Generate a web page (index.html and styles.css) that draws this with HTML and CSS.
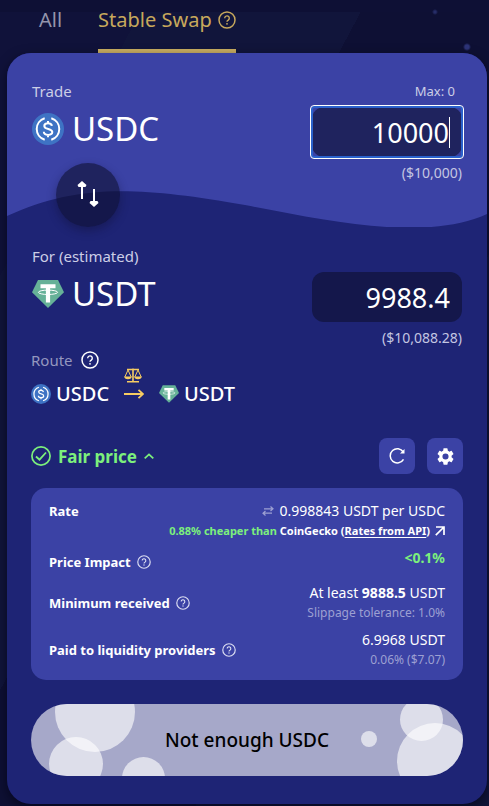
FILE: index.html
```html
<!DOCTYPE html>
<html lang="en">
<head>
<meta charset="utf-8">
<meta name="viewport" content="width=device-width, initial-scale=1">
<title>Stable Swap</title>
<link rel="stylesheet" href="styles.css">
</head>
<body>
<svg class="defs" aria-hidden="true">
  <symbol id="help" viewBox="0 0 18 18">
    <circle cx="9" cy="9" r="8" fill="none" stroke="currentColor" stroke-width="1.5"/>
    <path d="M6.700 7.200a2.300 2.300 0 1 1 3.600 1.900c-.9.6-1.300 1-1.300 1.700" fill="none" stroke="currentColor" stroke-width="1.4"/>
    <circle cx="9" cy="12.800" r=".9" fill="currentColor"/>
  </symbol>
  <symbol id="usdc" viewBox="0 0 32 32">
    <circle cx="16" cy="16" r="16" fill="#3e73c4"/>
    <path d="M12.700 5.200a11.300 11.300 0 0 0 0 21.600M19.300 5.200a11.300 11.300 0 0 1 0 21.600" fill="none" stroke="#fff" stroke-width="2"/>
    <path d="M19.900 12.900c-.2-1.800-1.600-2.700-3.900-2.700s-3.700 1-3.700 2.700c0 4.100 8 2 8 6.200 0 1.800-1.700 2.800-4.200 2.800s-4.200-1-4.300-3.100M16 7.900v2.600M16 21.700v2.600" fill="none" stroke="#fff" stroke-width="2"/>
  </symbol>
  <symbol id="usdt" viewBox="0 0 32 28">
    <path d="M6 0h20l6 12.200L16 28 0 12.200z" fill="#66b198"/>
    <path d="M8.500 4.200h15v4h-5.400v14.400h-4.200V8.200H8.500z" fill="#fff"/>
    <ellipse cx="16" cy="12.300" rx="9.600" ry="2.200" fill="none" stroke="#fff" stroke-width="1"/>
  </symbol>
</svg>

<nav class="tabs">
  <a class="tab" href="#all">All</a>
  <a class="tab tab-active" href="#stable" aria-current="page">Stable Swap <svg class="help-md"><use href="#help"/></svg></a>
</nav>

<main class="card">
  <svg class="wave" viewBox="0 0 480 174" preserveAspectRatio="none" aria-hidden="true">
    <path d="M0 0H480V161C420 188 330 170 238 152C130 133 70 131 0 163Z" fill="#3b42a5"/>
  </svg>

  <section class="side">
    <div class="side-token">
      <label class="label" for="pay">Trade</label>
      <div class="token"><svg class="coin"><use href="#usdc"/></svg>USDC</div>
      <button class="swap" type="button" aria-label="Switch tokens">
        <svg viewBox="0 0 24 28"><path d="M6 18V4M18 8v14" fill="none" stroke="#fff" stroke-width="2"/><path d="M6 0l4.500 4-1 2h-7l-1-2zM18 26l4.500-4-1-2h-7l-1 2z" fill="#fff"/></svg>
      </button>
    </div>
    <div class="side-amount">
      <span class="max">Max: 0</span>
      <div class="field field-focus">
        <input id="pay" class="amount" type="text" inputmode="decimal" value="10000"><span class="caret"></span>
      </div>
      <span class="usd">($10,000)</span>
    </div>
  </section>

  <section class="side">
    <div class="side-token">
      <label class="label" for="receive">For (estimated)</label>
      <div class="token"><svg class="coin"><use href="#usdt"/></svg>USDT</div>
    </div>
    <div class="side-amount">
      <span class="max"></span>
      <div class="field"><input id="receive" class="amount" type="text" value="9988.4" readonly></div>
      <span class="usd">($10,088.28)</span>
    </div>
  </section>

  <section class="route">
    <div class="route-title">Route <svg class="help-md"><use href="#help"/></svg></div>
    <div class="route-path">
      <span class="hop"><svg class="coin-sm"><use href="#usdc"/></svg>USDC</span>
      <span class="via">
        <svg class="scales" viewBox="0 0 18 15"><path d="M3 1.500h12M9 .5v13M3 13.800h12" fill="none" stroke="#f7cc62" stroke-width="1.600"/><path d="M4 2 .8 9M4 2l3.200 7M14 2l-3.200 7M14 2l3.200 7" fill="none" stroke="#f7cc62"/><path d="M.3 8.500h7.400a3.700 2.800 0 0 1-7.400 0zM10.300 8.500h7.400a3.700 2.800 0 0 1-7.400 0z" fill="#f7cc62"/></svg>
        <svg class="arrow" viewBox="0 0 20 10"><path d="M0 5h19M14.500.8 19 5l-4.500 4.200" fill="none" stroke="#f7cc62" stroke-width="1.800"/></svg>
      </span>
      <span class="hop"><svg class="coin-sm"><use href="#usdt"/></svg>USDT</span>
    </div>
  </section>

  <div class="status">
    <button class="fair" type="button" aria-expanded="true">
      <svg class="check" viewBox="0 0 20 20"><circle cx="10" cy="10" r="9.100" fill="none" stroke="currentColor" stroke-width="1.700"/><path d="m5 10.500 3.500 3.200L15 6.500" fill="none" stroke="currentColor" stroke-width="1.800"/></svg>
      Fair price
      <svg class="chevron" viewBox="0 0 10 6"><path d="m.7 5.300 4.300-4 4.300 4" fill="none" stroke="currentColor" stroke-width="1.700"/></svg>
    </button>
    <button class="tool" type="button" aria-label="Refresh">
      <svg viewBox="0 0 18 18"><path d="M15.300 5A7.100 7.100 0 1 0 15.500 12.300" fill="none" stroke="#fff" stroke-width="1.500"/><path d="M16.500 2v4.500H12z" fill="#fff"/></svg>
    </button>
    <button class="tool" type="button" aria-label="Settings">
      <svg class="gear" viewBox="2 2 20 20"><path fill="#fff" d="M19.140 12.940c.04-.3.060-.61.060-.94 0-.32-.02-.64-.07-.94l2.030-1.580a.49.49 0 0 0 .12-.61l-1.920-3.320a.488.488 0 0 0-.59-.22l-2.390.96c-.5-.38-1.030-.7-1.620-.94l-.36-2.540a.484.484 0 0 0-.48-.41h-3.840c-.24 0-.43.17-.47.41l-.36 2.540c-.59.24-1.130.57-1.620.94l-2.390-.96c-.22-.08-.47 0-.59.22L2.740 8.870c-.12.21-.08.47.12.61l2.030 1.580c-.05.3-.09.63-.09.94s.02.64.07.94l-2.030 1.580a.49.49 0 0 0-.12.61l1.920 3.320c.12.22.37.29.59.22l2.390-.96c.5.38 1.030.7 1.620.94l.36 2.540c.05.24.24.41.48.41h3.840c.24 0 .44-.17.47-.41l.36-2.540c.59-.24 1.130-.56 1.620-.94l2.390.96c.22.080.47 0 .59-.22l1.920-3.320c.12-.22.070-.47-.12-.61l-2.010-1.580zM12 15.600a3.600 3.600 0 1 1 0-7.200 3.600 3.600 0 0 1 0 7.200z"/></svg>
    </button>
  </div>

  <dl class="details">
    <div class="row row-top">
      <dt>Rate</dt>
      <dd>
        <div class="value"><svg class="flip" viewBox="0 0 12 10"><path d="M2 2.800h9M8.500.5 11 2.800 8.500 5M10 7.200H1M3.500 5 1 7.200l2.500 2.300" fill="none" stroke="currentColor" stroke-width="1.200"/></svg>0.998843 USDT per USDC</div>
        <div class="compare"><span><span class="good">0.88% cheaper than</span> CoinGecko (<a href="#rates">Rates from API</a>)</span><svg class="out" viewBox="0 0 10 10"><path d="M1 1h8v8M9 1 .8 9.200" fill="none" stroke="currentColor" stroke-width="1.700"/></svg></div>
      </dd>
    </div>
    <div class="row row-impact">
      <dt>Price Impact <svg class="help-sm"><use href="#help"/></svg></dt>
      <dd><div class="value good">&lt;0.1%</div></dd>
    </div>
    <div class="row">
      <dt>Minimum received <svg class="help-sm"><use href="#help"/></svg></dt>
      <dd><div class="value"><span>At least <b>9888.5</b> USDT</span></div><div class="note">Slippage tolerance: 1.0%</div></dd>
    </div>
    <div class="row">
      <dt>Paid to liquidity providers <svg class="help-sm"><use href="#help"/></svg></dt>
      <dd><div class="value">6.9968 USDT</div><div class="note">0.06% ($7.07)</div></dd>
    </div>
  </dl>

  <button class="submit" type="button">
    <span class="bubble b1"></span><span class="bubble b2"></span><span class="bubble b3"></span>
    <span class="bubble b4"></span><span class="bubble b5"></span><span class="bubble b6"></span>
    <span class="submit-text">Not enough USDC</span>
  </button>
</main>
</body>
</html>
```
FILE: styles.css
```css
* { box-sizing: border-box; }

body {
  margin: 0;
  padding: 0 2px 2px 7px;
  color: #fff;
  font-family: "Noto Sans", "Open Sans", sans-serif;
  background:
    radial-gradient(circle at 435px 12px, #262d68 1px, transparent 3px),
    radial-gradient(circle at 467px 47px, #2d3478 2px, transparent 4px),
    linear-gradient(#0e1035 12px, transparent 12px),
    linear-gradient(118deg, #10123a 16%, #11153b 16% 40%, #0e1034 40% 68%, #101539 68%);
}

button, input { font: inherit; color: inherit; border: 0; padding: 0; margin: 0; }
button { cursor: pointer; }
svg { display: block; flex: none; }
.defs { position: absolute; width: 0; height: 0; }

.help-md { width: 18px; height: 18px; }
.help-sm { width: 14px; height: 14px; color: #dcdef2; }

.tabs { display: flex; gap: 36px; padding-left: 32px; }
.tab {
  display: flex;
  align-items: center;
  gap: 6px;
  height: 53px;
  padding-bottom: 9px;
  border-bottom: 4px solid transparent;
  font-size: 20px;
  line-height: 40px;
  color: #9495ac;
  text-decoration: none;
}
.tab-active { color: #c7a85c; border-color: #ccb062; }

.card {
  position: relative;
  padding: 26px 24px 28px;
  border-radius: 24px;
  background: #1e2475;
  box-shadow: 0 4px 12px rgba(0, 0, 16, .6);
  overflow: hidden;
}
.wave { position: absolute; inset: 0 0 auto; width: 100%; height: 174px; }

.side { position: relative; display: flex; justify-content: space-between; padding: 0 1px; }
.side + .side { margin-top: 17px; }
.side-token { display: flex; flex-direction: column; }
.label { font-size: 15px; line-height: 24px; color: #cccee6; }
.token {
  display: flex;
  align-items: center;
  gap: 8px;
  height: 52px;
  font-size: 33px;
  font-weight: 400;
  line-height: 52px;
}
.coin { width: 32px; height: 32px; }
.swap {
  display: grid;
  place-items: center;
  width: 64px;
  height: 64px;
  margin: 8px 0 0 24px;
  border-radius: 50%;
  background: rgba(14, 15, 47, .6);
  box-shadow: 0 4px 10px rgba(14, 15, 47, .4);
}
.swap svg { width: 24px; height: 28px; }

.side-amount { display: flex; flex-direction: column; align-items: flex-end; }
.max { height: 24px; padding-right: 7px; font-size: 13px; line-height: 24px; color: #cccee6; }
.field {
  position: relative;
  display: flex;
  align-items: center;
  width: 150px;
  height: 50px;
  margin: 4px 0;
  padding: 0 12px;
  border-radius: 12px;
  background: rgba(14, 15, 47, .6);
}
.field-focus::before {
  content: "";
  position: absolute;
  inset: -2px;
  border: 1px solid #fff;
  border-radius: 4px;
  box-shadow: inset 0 0 0 2px #2b62cc;
}
.amount {
  flex: 1;
  min-width: 0;
  height: 50px;
  background: none;
  outline: 0;
  font-size: 27px;
  text-align: right;
}
.caret { width: 1px; height: 31px; background: #fff; }
.usd { font-size: 14px; line-height: 24px; color: #c4c6e2; }

.route { position: relative; }
.route-title { display: flex; align-items: center; gap: 8px; font-size: 15px; line-height: 20px; color: #9497bf; }
.route-title svg { color: #fff; }
.route-path { display: flex; align-items: center; gap: 15px; margin-top: 12px; font-size: 20px; line-height: 24px; font-weight: 500; }
.hop { display: flex; align-items: center; gap: 5px; }
.coin-sm { width: 20px; height: 20px; }
.via { position: relative; }
.scales { position: absolute; left: 0; bottom: 16px; width: 18px; height: 15px; }
.arrow { width: 20px; height: 10px; }

.status { display: flex; align-items: center; gap: 12px; margin-top: 32px; }
.fair {
  display: flex;
  align-items: center;
  gap: 7px;
  margin-right: auto;
  background: none;
  color: #7cf07c;
  font-size: 17px;
  font-weight: 700;
}
.check { width: 20px; height: 20px; }
.chevron { width: 10px; height: 6px; }
.tool { display: grid; place-items: center; width: 36px; height: 36px; border-radius: 8px; background: #3b42a5; }
.tool svg { width: 18px; height: 18px; }
.tool .gear { width: 17px; height: 17px; }

.details {
  display: grid;
  gap: 7px;
  margin: 14px 0 24px;
  padding: 13px 18px 10px;
  border-radius: 15px;
  background: #3b42a5;
}
.row { display: flex; align-items: center; justify-content: space-between; line-height: 20px; }
.row-top { align-items: flex-start; }
.row-impact { height: 28px; }
.row-impact dd { align-self: flex-start; }
.row dt { display: flex; align-items: center; gap: 6px; font-size: 13px; font-weight: 700; white-space: nowrap; }
.row dd { margin: 0; }
.value, .compare, .note { display: flex; justify-content: flex-end; align-items: center; gap: 5px; white-space: nowrap; }
.value { font-size: 14px; }
.compare { font-size: 11px; font-weight: 700; }
.compare a { color: inherit; text-underline-offset: 2px; }
.note { font-size: 12px; color: #9da0d2; }
.good { color: #7cf07c; font-weight: 700; }
.flip { width: 12px; height: 10px; color: #9da0d2; }
.out { width: 10px; height: 10px; }

.submit {
  position: relative;
  display: block;
  width: 100%;
  height: 72px;
  border-radius: 36px;
  background: #a6a8c9;
  color: #000;
  font-size: 19px;
  font-weight: 500;
  overflow: hidden;
}
.submit-text { position: relative; }
.bubble { position: absolute; border-radius: 50%; background: rgba(255, 255, 255, .62); }
.b1 { left: 24px; top: -32px; width: 80px; height: 80px; }
.b2 { left: 18px; top: 33px; width: 54px; height: 54px; }
.b3 { left: 91px; top: 53px; width: 43px; height: 43px; }
.b4 { right: 86px; top: 27px; width: 16px; height: 16px; }
.b5 { right: 20px; top: -6px; width: 43px; height: 43px; }
.b6 { right: -10px; top: 19px; width: 76px; height: 76px; }
```
